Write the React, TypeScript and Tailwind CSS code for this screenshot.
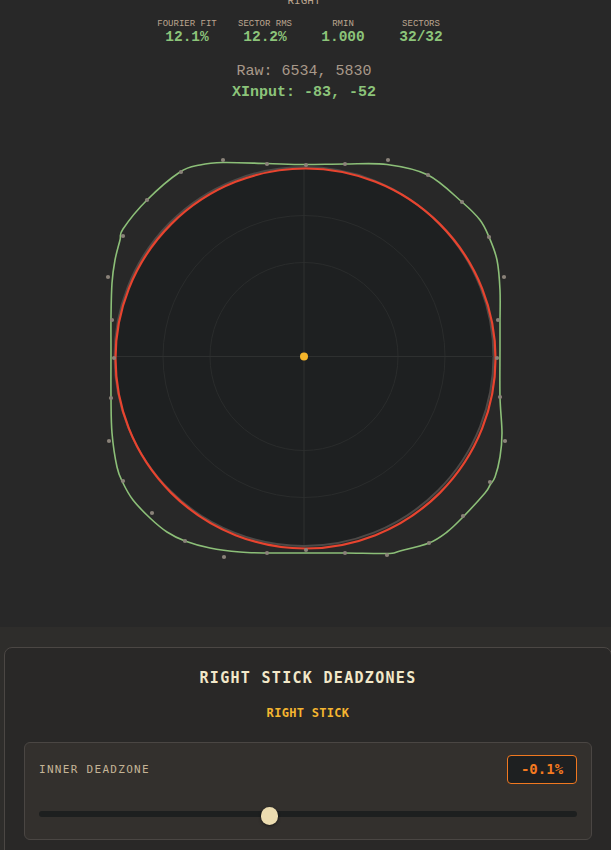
import React from "react";

const curvePts: [number, number][] = [
  [304, 164.5], [345, 164], [387, 164.5], [428, 175], [462, 202], [480, 220], [489, 237], [497, 260], [500, 290], [500, 323], [500, 350],
  [500, 397], [502, 433], [500, 457], [495, 477], [490, 485], [485, 493], [463, 517], [447, 532], [429, 543], [400, 551], [387, 553.5],
  [345, 553], [304, 553], [267, 553], [240, 552], [210, 548], [185, 541], [167, 532], [150, 518], [133, 500], [123, 483], [117, 467],
  [112, 433], [111, 397], [111, 350], [111, 317], [112, 283], [115, 260], [120, 240], [123, 229], [147, 200], [180, 172], [200, 165],
  [223, 162.5], [267, 163.5],
];

const dots: [number, number][] = [
  [306, 165], [345, 164], [388, 160], [428, 175], [462, 202], [489, 237], [504, 277], [498, 320], [497, 358], [500, 397], [505, 441],
  [490, 482], [463, 516], [429, 543], [387, 555], [345, 553], [306, 550], [267, 553], [224, 557], [185, 541], [152, 513], [123, 481],
  [109, 441], [111, 398], [114, 358], [112, 320], [108, 277], [123, 236], [147, 200], [181, 172], [223, 160], [267, 164],
];

function catmull(pts: [number, number][]): string {
  const n = pts.length;
  let d = `M ${pts[0][0]} ${pts[0][1]}`;
  for (let i = 0; i < n; i++) {
    const p0 = pts[(i - 1 + n) % n];
    const p1 = pts[i];
    const p2 = pts[(i + 1) % n];
    const p3 = pts[(i + 2) % n];
    const c1x = p1[0] + (p2[0] - p0[0]) / 6;
    const c1y = p1[1] + (p2[1] - p0[1]) / 6;
    const c2x = p2[0] - (p3[0] - p1[0]) / 6;
    const c2y = p2[1] - (p3[1] - p1[1]) / 6;
    d += ` C ${c1x.toFixed(2)} ${c1y.toFixed(2)} ${c2x.toFixed(2)} ${c2y.toFixed(2)} ${p2[0]} ${p2[1]}`;
  }
  return d + " Z";
}

const mono = { fontFamily: '"Liberation Mono", "Courier New", monospace' };
const dj = { fontFamily: '"DejaVu Sans Mono", "Liberation Mono", monospace' };

function Stat({ label, value }: { label: string; value: string }) {
  return (
    <div className="flex flex-col items-center">
      <div className="text-[9px] leading-[12px] text-[#bba58f]" style={mono}>{label}</div>
      <div className="text-[14.5px] leading-[14px] font-bold text-[#8cc47a]" style={mono}>{value}</div>
    </div>
  );
}

export default function App() {
  return (
    <div className="w-[611px] h-[850px] overflow-hidden bg-[#282828]">
      <div className="w-[608px] h-[627px] flex flex-col items-center">
        <div className="mt-[-4px] text-[11px] leading-[11px] text-[#bba58f]" style={mono}>RIGHT</div>
        <div className="mt-[11px] grid grid-cols-4 w-[312px]">
          <Stat label="FOURIER FIT" value="12.1%" />
          <Stat label="SECTOR RMS" value="12.2%" />
          <Stat label="RMIN" value="1.000" />
          <Stat label="SECTORS" value="32/32" />
        </div>
        <div className="mt-[19px] text-[15px] leading-[18px] text-[#a8998a]" style={mono}>Raw: 6534, 5830</div>
        <div className="mt-[3px] text-[15px] leading-[18px] font-bold text-[#8cc47a]" style={mono}>XInput: -83, -52</div>
        <svg className="mt-[44px]" width="420" height="420" viewBox="94 146 420 420">
          <circle cx="304" cy="356.5" r="189.5" fill="#1e2021" stroke="#4d4947" strokeWidth="2" />
          <circle cx="304" cy="356.5" r="141" fill="none" stroke="#2a2c2c" strokeWidth="1" />
          <circle cx="304" cy="356.5" r="94" fill="none" stroke="#2a2c2c" strokeWidth="1" />
          <line x1="115" y1="356.5" x2="493" y2="356.5" stroke="#2e3030" strokeWidth="1" />
          <line x1="304" y1="168" x2="304" y2="545" stroke="#2e3030" strokeWidth="1" />
          <circle cx="305.5" cy="358.5" r="190" fill="none" stroke="#e8442f" strokeWidth="2.2" />
          <path d={catmull(curvePts)} fill="none" stroke="#8cbf78" strokeWidth="1.6" />
          {dots.map(([x, y], i) => (
            <circle key={i} cx={x} cy={y} r="2.1" fill="#8a8279" />
          ))}
          <circle cx="304" cy="356.5" r="4" fill="#f5b52a" />
        </svg>
      </div>
      <div className="bg-[#2e2d2b] pt-[20px] pl-[4px] h-[223px]">
        <div className="w-[608px] rounded-lg border border-[#4b4744] bg-[#292827] px-[19px] pt-[19px] pb-[30px]">
          <div className="text-center text-[15px] leading-[22px] font-bold tracking-[1.3px] text-[#f2e8c9]" style={dj}>
            RIGHT STICK DEADZONES
          </div>
          <div className="mt-[16px] text-center text-[12px] leading-[16px] font-bold tracking-[0.3px] text-[#f4b530]" style={dj}>
            RIGHT STICK
          </div>
          <div className="mt-[21px] rounded-md border border-[#4a4643] bg-[#33302d] px-[14px] pt-[12px] pb-[14px]">
            <div className="flex items-center justify-between h-[29px]">
              <div className="mt-[1px] text-[11px] tracking-[1.3px] text-[#c4b496]" style={dj}>INNER DEADZONE</div>
              <div
                className="w-[70px] h-[29px] flex items-center justify-center rounded border border-[#f07820] bg-[#1e2021] text-[14px] font-bold text-[#f47a20]"
                style={dj}
              >
                -0.1%
              </div>
            </div>
            <div className="relative mt-[23px] h-[18px]">
              <div className="absolute left-0 right-0 top-[4px] h-[6px] rounded-full bg-[#1d1f1f]" />
              <div className="absolute left-[222px] top-0 w-[17px] h-[18px] rounded-full bg-[#ecdcb0] shadow-[0_1px_3px_rgba(0,0,0,0.5)]" />
            </div>
          </div>
        </div>
      </div>
    </div>
  );
}
